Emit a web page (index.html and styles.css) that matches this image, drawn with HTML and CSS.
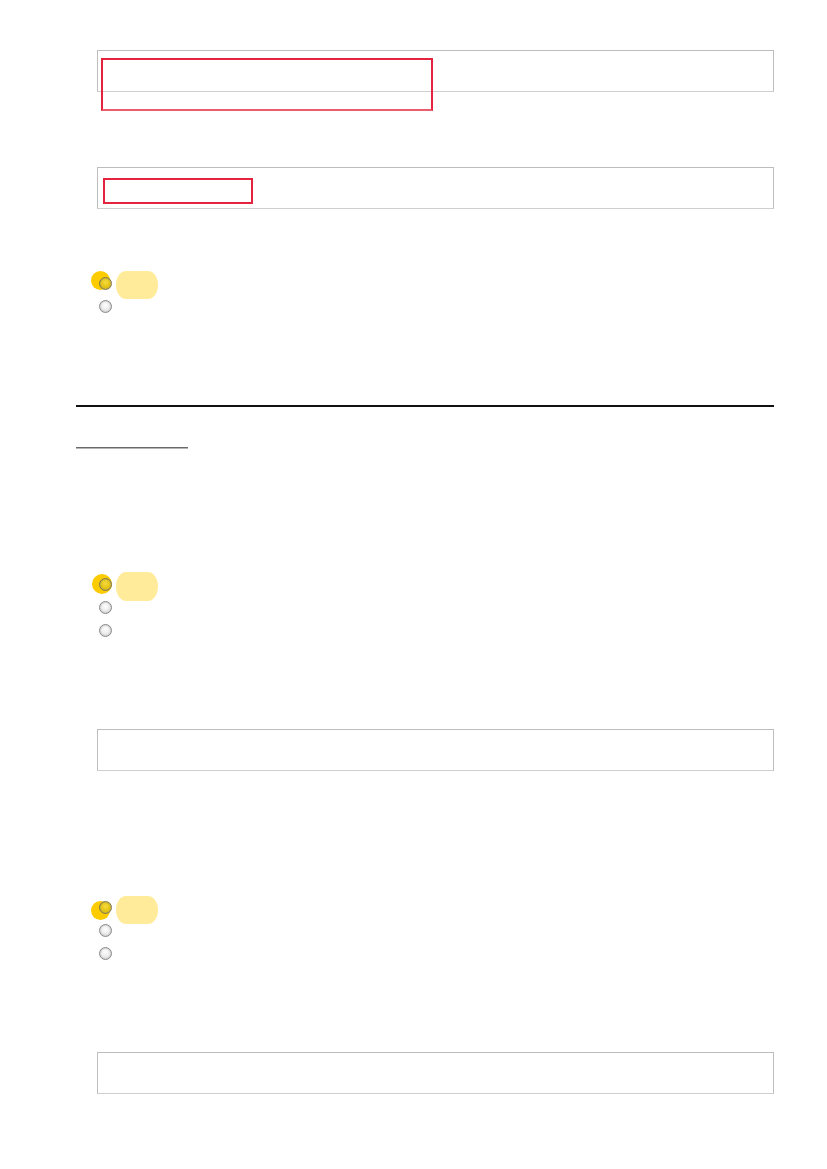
FILE: index.html
```html
<!DOCTYPE html>
<html lang="en-US">
    <head>
        <meta charset="utf-8">
        <title>Form review</title>
        <link rel="stylesheet" href="styles.css">
    </head>
    <body>
        <main class="page">
            <div class="field field-first">
                <span class="flag flag-wide"></span>
            </div>

            <div class="field field-second">
                <span class="flag flag-short"></span>
            </div>

            <div class="choices choices-first">
                <div class="choice">
                    <span class="dot dot-a"></span>
                    <span class="radio radio-marked"></span>
                    <span class="pill pill-a"></span>
                </div>
                <div class="choice"><span class="radio"></span></div>
            </div>

            <hr class="rule">
            <div class="underline"></div>

            <div class="choices choices-second">
                <div class="choice">
                    <span class="dot dot-b"></span>
                    <span class="radio radio-marked"></span>
                    <span class="pill pill-b"></span>
                </div>
                <div class="choice"><span class="radio"></span></div>
                <div class="choice"><span class="radio"></span></div>
            </div>

            <div class="field field-after"></div>

            <div class="choices choices-second">
                <div class="choice">
                    <span class="dot dot-c"></span>
                    <span class="radio radio-marked"></span>
                    <span class="pill pill-c"></span>
                </div>
                <div class="choice"><span class="radio"></span></div>
                <div class="choice"><span class="radio"></span></div>
            </div>

            <div class="field field-after"></div>
        </main>
    </body>
</html>
```

FILE: styles.css
```css
body {
    margin: 0;
    background: #ffffff;
    font-family: "Liberation Sans", Arial, sans-serif;
}

.page {
    width: 698px;
    padding: 50px 0 60px 76px;
}

/* text boxes */

.field {
    position: relative;
    margin-left: 21px;
    height: 40px;
    border: 1px solid #bdbdbd;
    border-bottom-color: #cfcfcf;
}

.field-second {
    margin-top: 75px;
}

.field-after {
    margin-top: 82px;
}

.flag {
    position: absolute;
    border: 2px solid #e4233e;
    box-sizing: border-box;
}

.flag-wide {
    left: 3px;
    top: 7px;
    width: 332px;
    height: 53px;
    border-bottom-color: #ea5d6e;
}

.flag-short {
    left: 5px;
    top: 10px;
    width: 150px;
    height: 26px;
}

/* radio groups */

.choices {
    margin-left: 23px;
}

.choices-first {
    margin-top: 68px;
}

.choices-second {
    margin-top: 130px;
}

.choice {
    position: relative;
    height: 23px;
}

.radio {
    position: relative;
    display: block;
    width: 13px;
    height: 13px;
    box-sizing: border-box;
    border-radius: 50%;
    border: 1px solid #8a8a8a;
    box-shadow: inset 0 0 0 1px #d6d6d6;
    background: radial-gradient(circle at 50% 40%, #ffffff 0%, #eeeeee 45%, #c9c9c9 100%);
}

.radio-marked {
    border-color: #7d7650;
    box-shadow: inset 0 0 0 1px #c9b640;
    background: radial-gradient(circle at 50% 40%, #f4da40 0%, #e6c410 55%, #c8a800 100%);
}

.dot {
    position: absolute;
    border-radius: 50%;
    background: #fccb00;
}

.dot-a {
    left: -8px;
    top: -6px;
    width: 19px;
    height: 19px;
}

.dot-b {
    left: -7px;
    top: -4px;
    width: 20px;
    height: 20px;
}

.dot-c {
    left: -8px;
    top: 0;
    width: 19px;
    height: 19px;
}

.pill {
    position: absolute;
    left: 17px;
    width: 42px;
    border-radius: 24% / 50%;
    background: #ffeb9a;
}

.pill-a {
    top: -6px;
    height: 28px;
}

.pill-b {
    top: -6px;
    height: 29px;
}

.pill-c {
    top: -5px;
    height: 28px;
}

/* divider */

.rule {
    margin: 82px 0 0;
    border: 0;
    height: 2px;
    background: #111111;
}

.underline {
    margin-top: 40px;
    width: 112px;
    height: 1px;
    background: #6a6a6a;
    box-shadow: 0 1px 0 #b5b5b5;
}
```
